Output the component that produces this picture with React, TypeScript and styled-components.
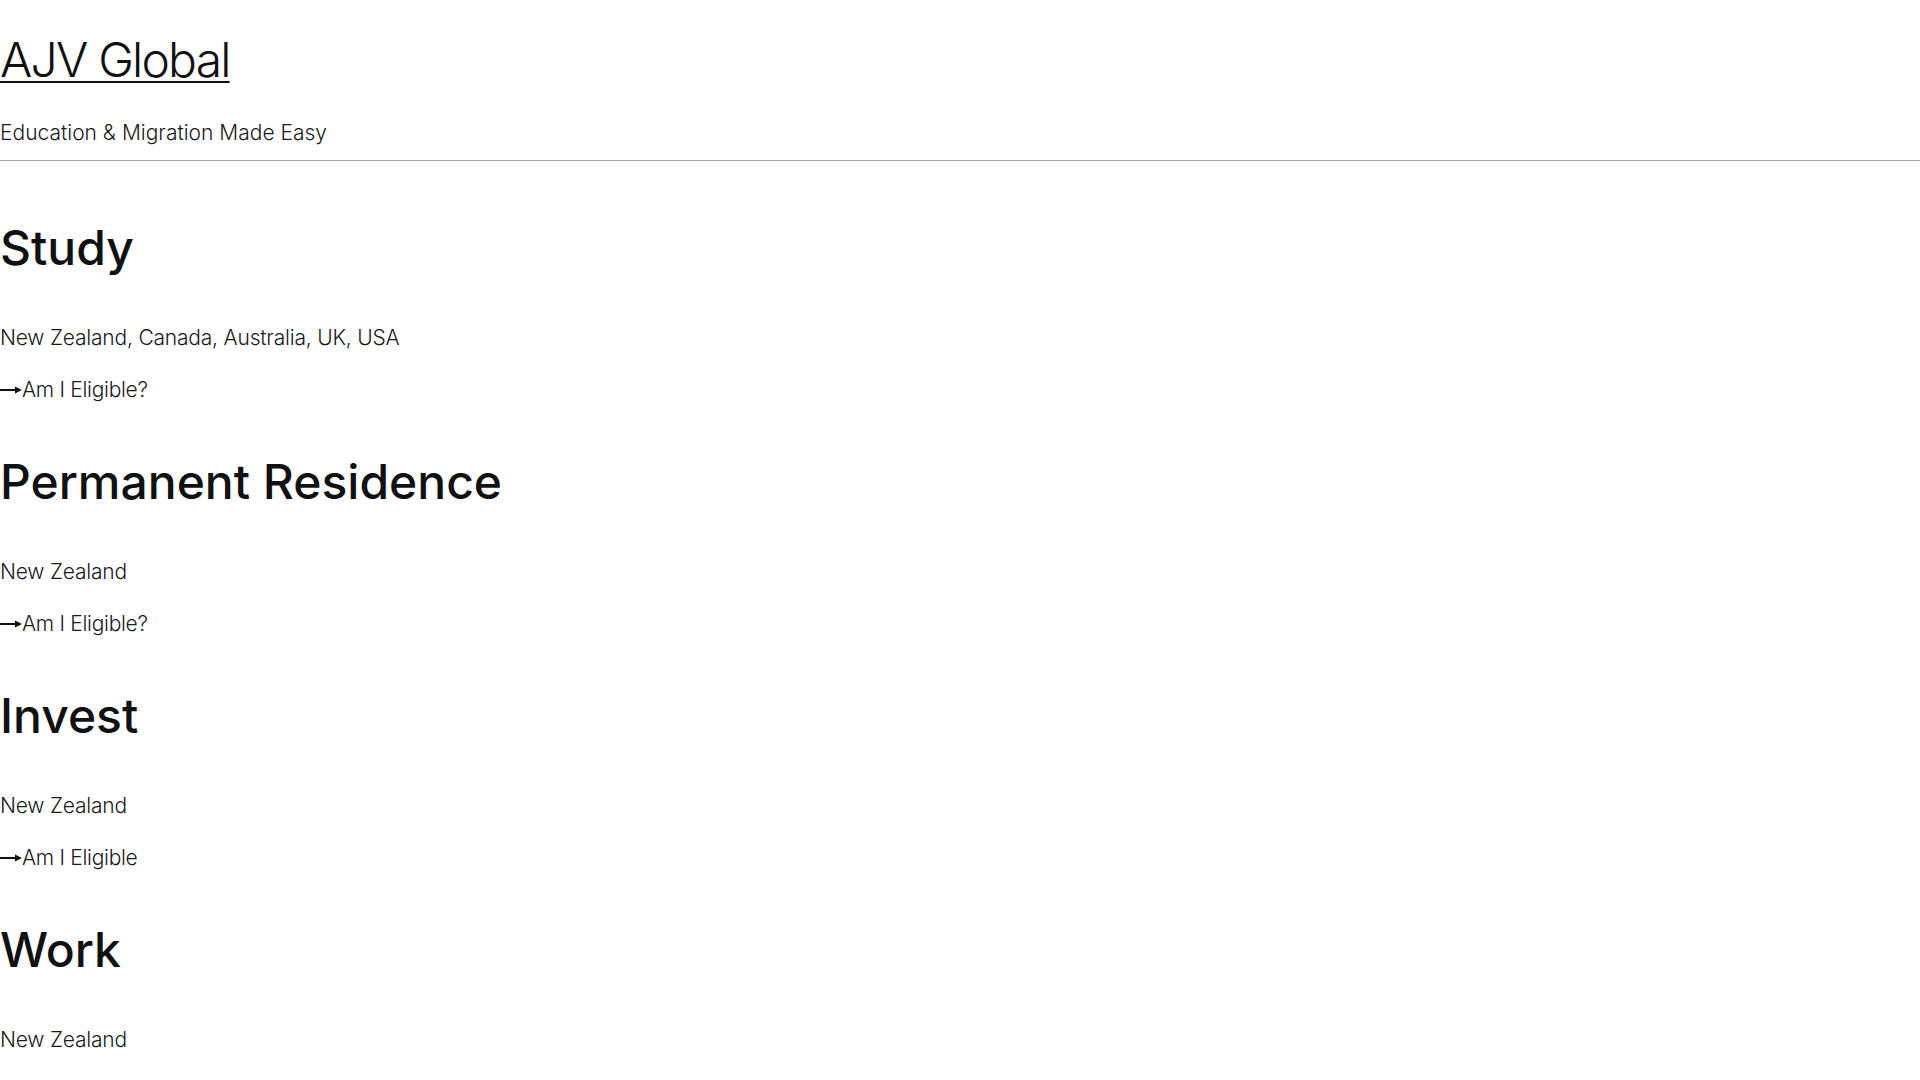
import React from "react";
import styled, { createGlobalStyle } from "styled-components";

const GlobalStyle = createGlobalStyle`
  body {
    margin: 0;
    background: #ffffff;
    color: #111111;
    font-family: Inter, "Noto Sans", "Liberation Sans", sans-serif;
  }
`;

const services = [
  { id: 1, title: "Study", places: "New Zealand, Canada, Australia, UK, USA", cta: "Am I Eligible?" },
  { id: 2, title: "Permanent Residence", places: "New Zealand", cta: "Am I Eligible?" },
  { id: 3, title: "Invest", places: "New Zealand", cta: "Am I Eligible" },
  { id: 4, title: "Work", places: "New Zealand", cta: "" },
];

const Arrow = () => (
  <svg width="22" height="10" viewBox="0 0 22 10">
    <line x1="0" y1="5" x2="17" y2="5" stroke="#111" strokeWidth="2" />
    <path d="M15 1.4 L22 5 L15 8.6 Z" fill="#111" />
  </svg>
);

const App = () => {
  return (
    <>
      <GlobalStyle />
      <Header>
        <Logo href="#">AJV Global</Logo>
        <Tagline>Education &amp; Migration Made Easy</Tagline>
      </Header>
      <Main>
        {services.map((el) => (
          <Section key={el.id}>
            <Title>{el.title}</Title>
            <Places>{el.places}</Places>
            {el.cta && (
              <Cta href="#">
                <Arrow />
                {el.cta}
              </Cta>
            )}
          </Section>
        ))}
      </Main>
    </>
  );
};

export default App;

const Header = styled.header`
  display: flex;
  flex-direction: column;
  align-items: flex-start;
  padding: 31px 0 11px 0;
  border-bottom: 1.5px solid #a8a8a8;
`;

const Logo = styled.a`
  font-size: 48px;
  line-height: 58px;
  font-weight: 300;
  color: #111;
  letter-spacing: -1.8px;
  text-decoration: underline;
  text-decoration-thickness: 1.5px;
  text-underline-offset: 4px;
  margin-bottom: 27px;
`;

const Tagline = styled.p`
  margin: 0;
  font-size: 21px;
  line-height: 33px;
  font-weight: 300;
  color: #1a1a1a;
`;

const Main = styled.main`
  display: flex;
  flex-direction: column;
  padding-top: 58px;
`;

const Section = styled.section`
  display: flex;
  flex-direction: column;
  align-items: flex-start;
  padding-bottom: 47px;
`;

const Title = styled.h2`
  margin: 0 0 44px 0;
  font-size: 48px;
  line-height: 58px;
  font-weight: 500;
  letter-spacing: 0;
  color: #111;
`;

const Places = styled.p`
  margin: 0 0 19px 0;
  font-size: 21px;
  line-height: 33px;
  font-weight: 300;
  letter-spacing: -0.2px;
  color: #1a1a1a;
`;

const Cta = styled.a`
  display: flex;
  align-items: center;
  font-size: 21px;
  line-height: 33px;
  font-weight: 300;
  letter-spacing: -0.3px;
  color: #1a1a1a;
  text-decoration: none;
`;
